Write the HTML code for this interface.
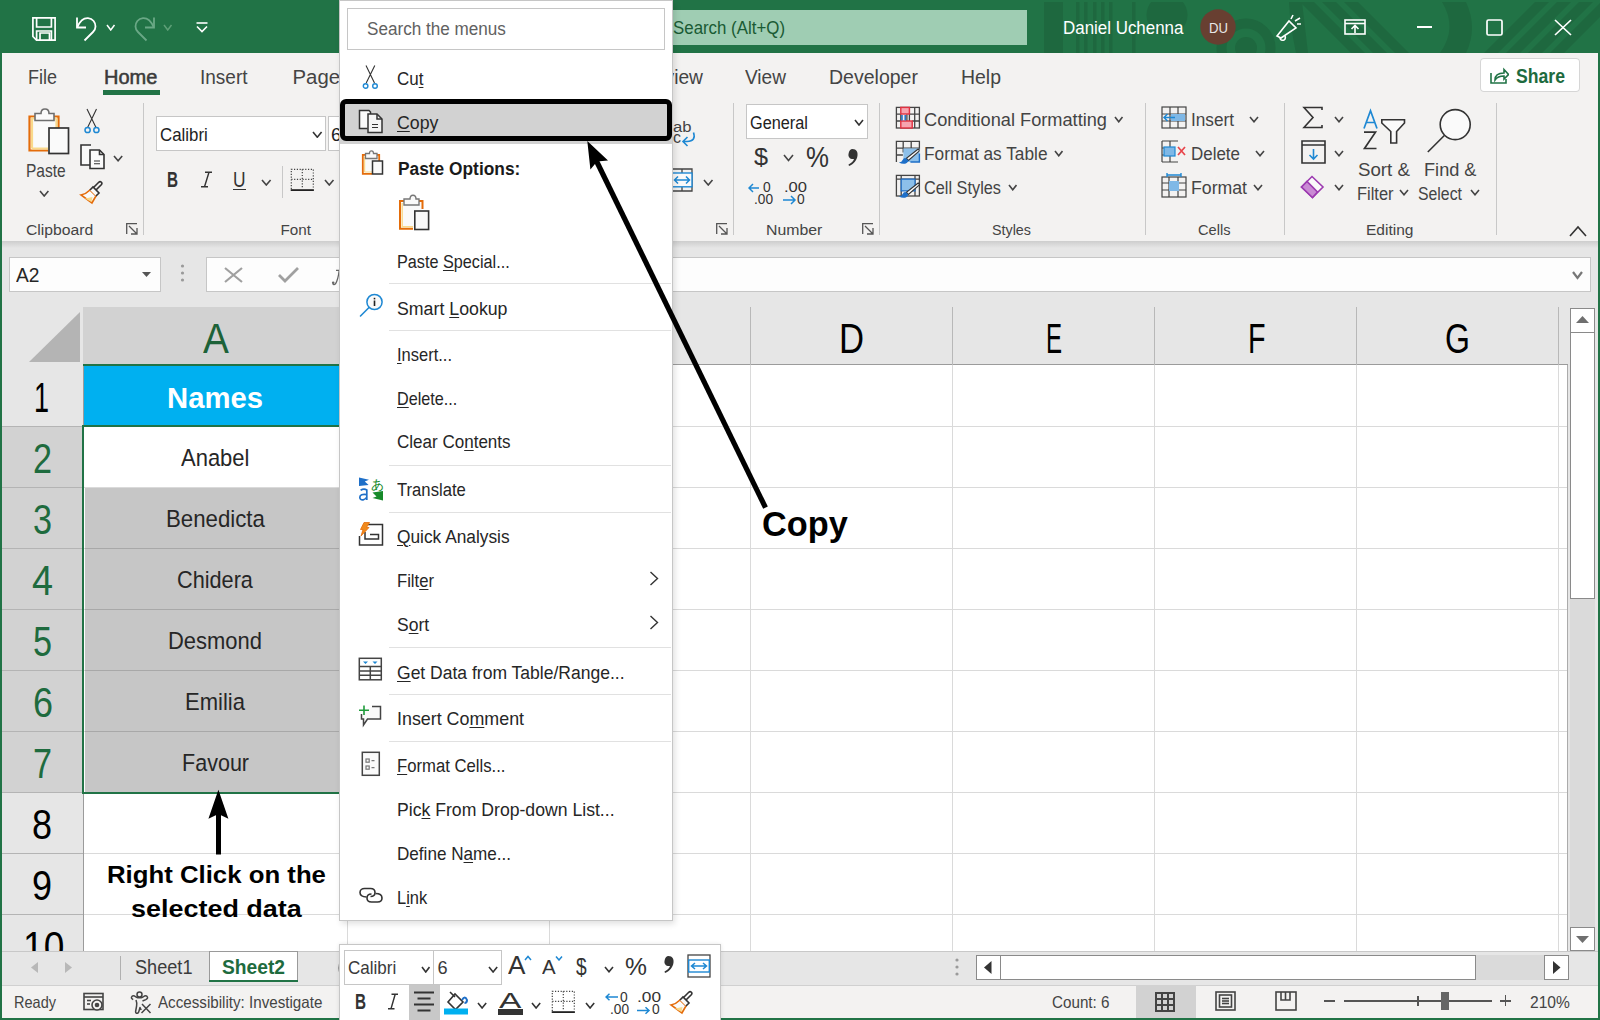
<!DOCTYPE html><html><head><meta charset="utf-8"><style>
html,body{margin:0;padding:0;width:1600px;height:1020px;overflow:hidden;background:#fff}
body{position:relative;font-family:"Liberation Sans",sans-serif}
.t{position:absolute;line-height:1;white-space:nowrap;transform-origin:0 0}
.r{position:absolute;display:block}
u{text-decoration:underline;text-underline-offset:2px;text-decoration-thickness:1px}
</style></head><body>
<div class="r" style="left:0px;top:0px;width:1600px;height:53px;background:#217346;"></div>
<svg class="r" style="left:0;top:0" width="1600" height="53" viewBox="0 0 1600 53"><defs><clipPath id="tbc"><rect x="0" y="2" width="1600" height="51"/></clipPath></defs>
    <g clip-path="url(#tbc)" fill="#1e683f" stroke="none">
    <rect x="1044" y="0" width="19" height="53"/>
    <rect x="1076" y="0" width="3.5" height="53"/><rect x="1084" y="0" width="3.5" height="53"/>
    <rect x="1093" y="0" width="3.5" height="53"/><rect x="1101" y="0" width="3.5" height="53"/>
    <rect x="1109" y="0" width="3.5" height="53"/><rect x="1132" y="0" width="3.5" height="53"/>
    <circle cx="1167" cy="15" r="20.5"/>
    <circle cx="1246" cy="48" r="24.5" fill="none" stroke="#1e683f" stroke-width="10"/><circle cx="1246" cy="48" r="11" fill="#1e683f"/><path d="M1289 2 H1302 L1308 53 H1296 Q1290 25 1289 2 Z"/>
    <path d="M1300 2 L1314 2 L1365 53 L1351 53 Z"/><path d="M1322 2 L1336 2 L1387 53 L1373 53 Z"/><path d="M1344 2 L1358 2 L1409 53 L1395 53 Z"/>
    <path d="M1442 2 L1466 2 Q1478 28 1466 53 L1440 53 Q1458 28 1442 2 Z"/>
    <path d="M1484 53 L1535 2 L1549 2 L1498 53 Z"/><path d="M1506 53 L1557 2 L1571 2 L1520 53 Z"/>
    <path d="M1528 53 L1579 2 L1593 2 L1542 53 Z"/><path d="M1550 53 L1601 2 L1615 2 L1564 53 Z"/>
    </g></svg>
<div class="r" style="left:0px;top:53px;width:1600px;height:967px;background:#217346;"></div>
<div class="r" style="left:2px;top:53px;width:1596px;height:188px;background:#f3f2f1;"></div>
<div class="r" style="left:2px;top:241px;width:1596px;height:66px;background:#e6e6e6;"></div>
<div class="r" style="left:2px;top:241px;width:1596px;height:7px;background:linear-gradient(#cdcdcd,#e6e6e6);"></div>
<div class="r" style="left:9px;top:257px;width:152px;height:35px;background:#fdfdfd;box-shadow:inset 0 0 0 1px #c6c6c6;"></div>
<div class="r" style="left:206px;top:257px;width:1385px;height:35px;background:#fdfdfd;box-shadow:inset 0 0 0 1px #c6c6c6;"></div>
<div class="r" style="left:2px;top:307px;width:1568px;height:644px;background:#ffffff;"></div>
<div class="r" style="left:2px;top:307px;width:1568px;height:58px;background:#e6e6e6;"></div>
<div class="r" style="left:83px;top:307px;width:264px;height:58px;background:#d2d2d2;"></div>
<div class="r" style="left:2px;top:365px;width:81px;height:586px;background:#e6e6e6;"></div>
<div class="r" style="left:2px;top:426px;width:81px;height:366px;background:#d2d2d2;"></div>
<div class="r" style="left:83px;top:364px;width:1485px;height:1px;background:#9b9b9b;"></div>
<div class="r" style="left:83px;top:365px;width:1px;height:586px;background:#9b9b9b;"></div>
<svg class="r" style="left:29px;top:312px;" width="52" height="51" viewBox="0 0 52 51"><path d="M51 0 L51 50 L0 50 Z" fill="#b4b4b4"/></svg>
<div class="r" style="left:347px;top:307px;width:1px;height:58px;background:#b8b8b8;"></div>
<div class="r" style="left:549px;top:307px;width:1px;height:58px;background:#b8b8b8;"></div>
<div class="r" style="left:750px;top:307px;width:1px;height:58px;background:#b8b8b8;"></div>
<div class="r" style="left:952px;top:307px;width:1px;height:58px;background:#b8b8b8;"></div>
<div class="r" style="left:1154px;top:307px;width:1px;height:58px;background:#b8b8b8;"></div>
<div class="r" style="left:1356px;top:307px;width:1px;height:58px;background:#b8b8b8;"></div>
<div class="r" style="left:1558px;top:307px;width:1px;height:58px;background:#b8b8b8;"></div>
<div class="r" style="left:347px;top:365px;width:1px;height:586px;background:#dadada;"></div>
<div class="r" style="left:549px;top:365px;width:1px;height:586px;background:#dadada;"></div>
<div class="r" style="left:750px;top:365px;width:1px;height:586px;background:#dadada;"></div>
<div class="r" style="left:952px;top:365px;width:1px;height:586px;background:#dadada;"></div>
<div class="r" style="left:1154px;top:365px;width:1px;height:586px;background:#dadada;"></div>
<div class="r" style="left:1356px;top:365px;width:1px;height:586px;background:#dadada;"></div>
<div class="r" style="left:1558px;top:365px;width:1px;height:586px;background:#dadada;"></div>
<div class="r" style="left:84px;top:426px;width:1484px;height:1px;background:#dadada;"></div>
<div class="r" style="left:2px;top:426px;width:81px;height:1px;background:#b4b4b4;"></div>
<div class="r" style="left:84px;top:487px;width:1484px;height:1px;background:#dadada;"></div>
<div class="r" style="left:2px;top:487px;width:81px;height:1px;background:#b4b4b4;"></div>
<div class="r" style="left:84px;top:548px;width:1484px;height:1px;background:#dadada;"></div>
<div class="r" style="left:2px;top:548px;width:81px;height:1px;background:#b4b4b4;"></div>
<div class="r" style="left:84px;top:609px;width:1484px;height:1px;background:#dadada;"></div>
<div class="r" style="left:2px;top:609px;width:81px;height:1px;background:#b4b4b4;"></div>
<div class="r" style="left:84px;top:670px;width:1484px;height:1px;background:#dadada;"></div>
<div class="r" style="left:2px;top:670px;width:81px;height:1px;background:#b4b4b4;"></div>
<div class="r" style="left:84px;top:731px;width:1484px;height:1px;background:#dadada;"></div>
<div class="r" style="left:2px;top:731px;width:81px;height:1px;background:#b4b4b4;"></div>
<div class="r" style="left:84px;top:792px;width:1484px;height:1px;background:#dadada;"></div>
<div class="r" style="left:2px;top:792px;width:81px;height:1px;background:#b4b4b4;"></div>
<div class="r" style="left:84px;top:853px;width:1484px;height:1px;background:#dadada;"></div>
<div class="r" style="left:2px;top:853px;width:81px;height:1px;background:#b4b4b4;"></div>
<div class="r" style="left:84px;top:914px;width:1484px;height:1px;background:#dadada;"></div>
<div class="r" style="left:2px;top:914px;width:81px;height:1px;background:#b4b4b4;"></div>
<div class="r" style="left:1567px;top:365px;width:1px;height:586px;background:#ababab;"></div>
<div class="r" style="left:84px;top:365px;width:263px;height:61px;background:#00b0f0;"></div>
<div class="r" style="left:85px;top:488px;width:262px;height:304px;background:#c6c6c6;"></div>
<div class="r" style="left:85px;top:548px;width:262px;height:1px;background:#a8a8a8;"></div>
<div class="r" style="left:85px;top:609px;width:262px;height:1px;background:#a8a8a8;"></div>
<div class="r" style="left:85px;top:670px;width:262px;height:1px;background:#a8a8a8;"></div>
<div class="r" style="left:85px;top:731px;width:262px;height:1px;background:#a8a8a8;"></div>
<div class="r" style="left:84px;top:426px;width:263px;height:1px;background:#ffffff;"></div>
<div class="r" style="left:82px;top:425px;width:265px;height:2px;background:#217346;"></div>
<div class="r" style="left:82px;top:425px;width:2px;height:369px;background:#217346;"></div>
<div class="r" style="left:82px;top:792px;width:265px;height:2px;background:#217346;"></div>
<div class="r" style="left:83px;top:364px;width:264px;height:2px;background:#217346;"></div>
<div class="t" style="left:203.00px;top:317.00px;font-size:42.59px;color:#1d6238;transform:scaleX(0.9112);">A</div>
<div class="t" style="left:839.00px;top:317.00px;font-size:43.02px;color:#000;transform:scaleX(0.8070);">D</div>
<div class="t" style="left:1046.40px;top:317.00px;font-size:43.02px;color:#000;transform:scaleX(0.5592);">E</div>
<div class="t" style="left:1247.50px;top:317.00px;font-size:43.02px;color:#000;transform:scaleX(0.6668);">F</div>
<div class="t" style="left:1445.00px;top:317.00px;font-size:43.02px;color:#000;transform:scaleX(0.7450);">G</div>
<div class="t" style="left:34.00px;top:377.00px;font-size:42.15px;color:#000;transform:scaleX(0.6412);">1</div>
<div class="t" style="left:33.00px;top:438.00px;font-size:42.15px;color:#1e6b3e;transform:scaleX(0.8122);">2</div>
<div class="t" style="left:33.00px;top:499.00px;font-size:42.15px;color:#1e6b3e;transform:scaleX(0.8122);">3</div>
<div class="t" style="left:32.00px;top:560.00px;font-size:42.15px;color:#1e6b3e;transform:scaleX(0.8977);">4</div>
<div class="t" style="left:33.00px;top:621.00px;font-size:42.15px;color:#1e6b3e;transform:scaleX(0.8122);">5</div>
<div class="t" style="left:33.00px;top:682.00px;font-size:42.15px;color:#1e6b3e;transform:scaleX(0.8549);">6</div>
<div class="t" style="left:33.00px;top:743.00px;font-size:42.15px;color:#1e6b3e;transform:scaleX(0.8122);">7</div>
<div class="t" style="left:32.00px;top:804.00px;font-size:42.15px;color:#000;transform:scaleX(0.8549);">8</div>
<div class="t" style="left:32.00px;top:865.00px;font-size:42.15px;color:#000;transform:scaleX(0.8549);">9</div>
<div class="t" style="left:23.30px;top:926.00px;font-size:42.15px;color:#000;transform:scaleX(0.8806);">10</div>
<div class="t" style="left:167.00px;top:384.00px;font-size:29.07px;color:#fff;font-weight:bold;transform:scaleX(1.0068);">Names</div>
<div class="t" style="left:180.50px;top:447.00px;font-size:23.26px;color:#262626;transform:scaleX(0.9456);">Anabel</div>
<div class="t" style="left:166.00px;top:508.00px;font-size:23.26px;color:#262626;transform:scaleX(0.9566);">Benedicta</div>
<div class="t" style="left:177.00px;top:569.00px;font-size:23.26px;color:#262626;transform:scaleX(0.9324);">Chidera</div>
<div class="t" style="left:168.00px;top:630.00px;font-size:23.26px;color:#262626;transform:scaleX(0.9444);">Desmond</div>
<div class="t" style="left:185.00px;top:691.00px;font-size:23.26px;color:#262626;transform:scaleX(0.9468);">Emilia</div>
<div class="t" style="left:182.00px;top:752.00px;font-size:23.26px;color:#262626;transform:scaleX(0.9264);">Favour</div>
<div class="r" style="left:1568px;top:307px;width:30px;height:644px;background:#e6e6e6;"></div>
<div class="r" style="left:1570px;top:308px;width:25px;height:25px;background:#fff;box-shadow:inset 0 0 0 1px #8a8a8a;"></div>
<svg class="r" style="left:1576px;top:316px;" width="13" height="8" viewBox="0 0 13 8"><path d="M0 7 L6.5 0 L13 7 Z" fill="#6f6f6f"/></svg>
<div class="r" style="left:1570px;top:332px;width:25px;height:267px;background:#fff;box-shadow:inset 0 0 0 1px #8a8a8a;"></div>
<div class="r" style="left:1570px;top:599px;width:25px;height:328px;background:#dadada;"></div>
<div class="r" style="left:1570px;top:927px;width:25px;height:24px;background:#fff;box-shadow:inset 0 0 0 1px #8a8a8a;"></div>
<svg class="r" style="left:1576px;top:936px;" width="13" height="8" viewBox="0 0 13 8"><path d="M0 0 L6.5 7 L13 0 Z" fill="#6f6f6f"/></svg>
<div class="r" style="left:2px;top:951px;width:1596px;height:34px;background:#e6e6e6;"></div>
<div class="r" style="left:2px;top:951px;width:1596px;height:1px;background:#c8c8c8;"></div>
<div class="r" style="left:2px;top:985px;width:1596px;height:1px;background:#d0d0d0;"></div>
<svg class="r" style="left:31px;top:962px;" width="7" height="11" viewBox="0 0 7 11"><path d="M7 0 L0 5.5 L7 11 Z" fill="#b8b8b8"/></svg>
<svg class="r" style="left:65px;top:962px;" width="7" height="11" viewBox="0 0 7 11"><path d="M0 0 L7 5.5 L0 11 Z" fill="#b8b8b8"/></svg>
<div class="r" style="left:120px;top:956px;width:1px;height:24px;background:#b0b0b0;"></div>
<div class="t" style="left:134.50px;top:957.00px;font-size:20.35px;color:#3b3b3b;transform:scaleX(0.8914);">Sheet1</div>
<div class="r" style="left:209px;top:951px;width:89px;height:31px;background:#fff;box-shadow:inset 1px 1px 0 #9a9a9a, inset -1px 0 0 #9a9a9a;"></div>
<div class="r" style="left:209px;top:980px;width:89px;height:2px;background:#217346;"></div>
<div class="t" style="left:222.00px;top:957.00px;font-size:20.35px;color:#1e6b3e;font-weight:bold;transform:scaleX(0.9439);">Sheet2</div>
<svg class="r" style="left:335px;top:960px;" width="8" height="16" viewBox="0 0 8 16"><path d="M6 1.5 Q1.5 8 6 14.5" fill="none" stroke="#9a9a9a" stroke-width="1.5"/></svg>
<svg class="r" style="left:955px;top:958px;" width="4" height="18" viewBox="0 0 4 18"><circle cx="2" cy="2" r="1.6" fill="#9a9a9a"/><circle cx="2" cy="9" r="1.6" fill="#9a9a9a"/><circle cx="2" cy="16" r="1.6" fill="#9a9a9a"/></svg>
<div class="r" style="left:976px;top:955px;width:593px;height:25px;background:#dadada;"></div>
<div class="r" style="left:976px;top:955px;width:25px;height:25px;background:#fff;box-shadow:inset 0 0 0 1px #8a8a8a;"></div>
<svg class="r" style="left:984px;top:961px;" width="8" height="13" viewBox="0 0 8 13"><path d="M7.5 0 L0 6.5 L7.5 13 Z" fill="#333"/></svg>
<div class="r" style="left:1000px;top:955px;width:476px;height:25px;background:#fff;box-shadow:inset 0 0 0 1px #8a8a8a;"></div>
<div class="r" style="left:1544px;top:955px;width:25px;height:25px;background:#fff;box-shadow:inset 0 0 0 1px #8a8a8a;"></div>
<svg class="r" style="left:1553px;top:961px;" width="8" height="13" viewBox="0 0 8 13"><path d="M0 0 L7.5 6.5 L0 13 Z" fill="#333"/></svg>
<div class="r" style="left:2px;top:986px;width:1596px;height:32px;background:#f3f2f1;"></div>
<div class="t" style="left:14.00px;top:995.00px;font-size:16.72px;color:#444;transform:scaleX(0.8694);">Ready</div>
<svg class="r" style="left:83px;top:992px;" width="22" height="20" viewBox="0 0 22 20"><g fill="none" stroke="#444" stroke-width="1.6"><rect x="1" y="1.5" width="19" height="16"/><line x1="1" y1="5" x2="20" y2="5"/><line x1="4" y1="8.5" x2="8" y2="8.5"/><line x1="4" y1="12" x2="7" y2="12"/><circle cx="14" cy="13" r="5" fill="#f3f2f1"/></g><circle cx="14" cy="13" r="2.3" fill="#444"/></svg>
<svg class="r" style="left:129px;top:990px;" width="24" height="26" viewBox="0 0 24 26"><g fill="none" stroke="#444" stroke-width="1.5" stroke-linejoin="round"><circle cx="10.5" cy="4.6" r="2.5"/><path d="M4.2 9.6 Q1.2 8.2 3.2 6.2 Q4.5 5.2 7 7 Q10.5 8.6 14 7 Q16.5 5.2 17.8 6.2 Q19.8 8.2 16.8 9.6 L13.5 11"/><path d="M7 10 Q8.2 13 7.6 16 L6.6 21.5 Q6.6 23.6 8.4 23.3 Q9.6 23 10 21 L11 17.5 L12.2 20"/><path d="M13 14 L21.5 23 M21.5 14 L12.5 23"/></g></svg>
<div class="t" style="left:158.00px;top:995.00px;font-size:16.72px;color:#444;transform:scaleX(0.9079);">Accessibility: Investigate</div>
<div class="t" style="left:1052.00px;top:995.00px;font-size:16.72px;color:#444;transform:scaleX(0.9100);">Count: 6</div>
<div class="r" style="left:1136px;top:985px;width:60px;height:33px;background:#d2d2d2;"></div>
<svg class="r" style="left:1155px;top:992px;" width="20" height="20" viewBox="0 0 20 20"><g fill="none" stroke="#444" stroke-width="2"><rect x="1" y="1" width="18" height="18"/><line x1="7" y1="1" x2="7" y2="19"/><line x1="13" y1="1" x2="13" y2="19"/><line x1="1" y1="7" x2="19" y2="7"/><line x1="1" y1="13" x2="19" y2="13"/></g></svg>
<svg class="r" style="left:1215px;top:991px;" width="21" height="20" viewBox="0 0 21 20"><g fill="none" stroke="#444" stroke-width="1.6"><rect x="1" y="1" width="19" height="18"/><rect x="4.5" y="4" width="12" height="12"/><line x1="7" y1="7.5" x2="14" y2="7.5"/><line x1="7" y1="10" x2="14" y2="10"/><line x1="7" y1="12.5" x2="14" y2="12.5"/></g></svg>
<svg class="r" style="left:1275px;top:991px;" width="22" height="20" viewBox="0 0 22 20"><g fill="none" stroke="#444" stroke-width="1.6"><rect x="1" y="1" width="20" height="18"/><polyline points="6,1 6,9 15,9 15,1"/><line x1="10.5" y1="1" x2="10.5" y2="9"/></g></svg>
<div class="r" style="left:1324px;top:1000px;width:11px;height:1.5px;background:#555;"></div>
<div class="r" style="left:1344px;top:1000px;width:148px;height:1.5px;background:#555;"></div>
<div class="r" style="left:1417px;top:996px;width:1.5px;height:10px;background:#555;"></div>
<div class="r" style="left:1441px;top:992px;width:8px;height:18px;background:#666;"></div>
<div class="r" style="left:1500px;top:1000px;width:11px;height:1.5px;background:#555;"></div>
<div class="r" style="left:1504.8px;top:995px;width:1.5px;height:11px;background:#555;"></div>
<div class="t" style="left:1530.00px;top:995.00px;font-size:16.72px;color:#444;transform:scaleX(0.9348);">210%</div>
<div class="t" style="left:16.00px;top:265.00px;font-size:20.35px;color:#262626;transform:scaleX(0.9427);">A2</div>
<svg class="r" style="left:142px;top:272px;" width="9" height="5" viewBox="0 0 9 5"><path d="M0 0 L9 0 L4.5 5 Z" fill="#555"/></svg>
<svg class="r" style="left:180px;top:264px;" width="5" height="18" viewBox="0 0 5 18"><circle cx="2.5" cy="2" r="1.6" fill="#9a9a9a"/><circle cx="2.5" cy="9" r="1.6" fill="#9a9a9a"/><circle cx="2.5" cy="16" r="1.6" fill="#9a9a9a"/></svg>
<svg class="r" style="left:224px;top:267px;" width="19" height="16" viewBox="0 0 19 16"><path d="M1 1 L18 15 M18 1 L1 15" stroke="#a0a0a0" stroke-width="2.2" fill="none"/></svg>
<svg class="r" style="left:278px;top:267px;" width="21" height="16" viewBox="0 0 21 16"><path d="M1 8 L7 14 L20 1" stroke="#a0a0a0" stroke-width="2.8" fill="none"/></svg>
<svg class="r" style="left:330px;top:266px;" width="12" height="22" viewBox="0 0 12 22"><path d="M6 4.3 H10 M9.2 4.5 Q8 14 5.5 17.8 Q3.8 19.6 2.8 17.6" fill="none" stroke="#666" stroke-width="1.3"/><circle cx="3.2" cy="16.8" r="1.3" fill="#666"/></svg>
<svg class="r" style="left:1572px;top:271px;" width="11" height="9" viewBox="0 0 11 9"><path d="M1 1 L5.5 7 L10 1" stroke="#777" stroke-width="2.2" fill="none"/></svg>
<svg class="r" style="left:31px;top:16px;" width="26" height="26" viewBox="0 0 26 26"><g fill="none" stroke="#fff" stroke-width="1.7"><path d="M1.9 1.9 H24.1 V24.1 H5.5 L1.9 20.5 Z"/><path d="M5.6 1.9 V11 H20.4 V1.9"/><path d="M5.6 24.1 V15 H20.4 V24.1"/><path d="M9 24.1 V17 H18.5 V24.1"/></g></svg>
<svg class="r" style="left:75px;top:16px;" width="24" height="26" viewBox="0 0 24 26"><g fill="none" stroke="#fff" stroke-width="1.8"><path d="M2 1.5 V11.5 H11"/><path d="M2.5 11 C5 5 9 2 13 2.2 C18 2.5 20.5 6.5 20.5 10.5 C20.5 13 19.5 14.5 18 16 L9.5 24.5"/></g></svg>
<svg class="r" style="left:106px;top:24px;" width="9.5" height="7" viewBox="0 0 9.5 7"><path d="M1 1 L4.75 6 L8.5 1" fill="none" stroke="#fff" stroke-width="1.5"/></svg>
<svg class="r" style="left:132px;top:16px;" width="24" height="26" viewBox="0 0 24 26"><g fill="none" stroke="#6aa886" stroke-width="1.8"><path d="M22 1.5 V11.5 H13"/><path d="M21.5 11 C19 5 15 2 11 2.2 C6 2.5 3.5 6.5 3.5 10.5 C3.5 13 4.5 14.5 6 16 L14.5 24.5"/></g></svg>
<svg class="r" style="left:163px;top:24px;" width="9.5" height="7" viewBox="0 0 9.5 7"><path d="M1 1 L4.75 6 L8.5 1" fill="none" stroke="#5e9f77" stroke-width="1.5"/></svg>
<svg class="r" style="left:196px;top:22px;" width="12" height="11" viewBox="0 0 12 11"><g fill="none" stroke="#fff" stroke-width="1.6"><path d="M0.5 1 H11.5"/><path d="M1 4.5 L6 9.5 L11 4.5"/></g></svg>
<div class="r" style="left:672px;top:10px;width:355px;height:35px;background:#9fcdb3;"></div>
<div class="t" style="left:673.00px;top:19.00px;font-size:18.90px;color:#1a5b34;transform:scaleX(0.8927);">Search (Alt+Q)</div>
<div class="t" style="left:1063.00px;top:19.00px;font-size:18.90px;color:#fff;transform:scaleX(0.8957);">Daniel Uchenna</div>
<svg class="r" style="left:1200px;top:9px;" width="36" height="36" viewBox="0 0 36 36"><circle cx="18" cy="18" r="17.7" fill="#683f31"/></svg>
<div class="t" style="left:1208.50px;top:20.00px;font-size:15.26px;color:#e8e8e8;transform:scaleX(0.8615);">DU</div>
<svg class="r" style="left:1275px;top:13px;" width="28" height="28" viewBox="0 0 28 28"><g fill="none" stroke="#fff" stroke-width="1.6"><path d="M2 23 L14 8 L21 15 L6 25 Z"/><path d="M5 24.5 Q5 28 9 27 Q11 26 10 23"/><path d="M16 6 L18 2 M20 8 L25 5 M22 11 L26 11"/></g></svg>
<svg class="r" style="left:1344px;top:19px;" width="22" height="16" viewBox="0 0 22 16"><g fill="none" stroke="#fff" stroke-width="1.6"><rect x="1" y="1" width="20" height="14"/><line x1="1" y1="4.5" x2="21" y2="4.5"/><path d="M11 14 V7 M7.5 10 L11 6.5 L14.5 10"/></g></svg>
<div class="r" style="left:1417px;top:26px;width:15px;height:1.6000000000000014px;background:#fff;"></div>
<svg class="r" style="left:1486px;top:19px;" width="17" height="17" viewBox="0 0 17 17"><rect x="1" y="1" width="15" height="15" rx="1.5" fill="none" stroke="#fff" stroke-width="1.7"/></svg>
<svg class="r" style="left:1554px;top:19px;" width="18" height="17" viewBox="0 0 18 17"><path d="M1 1 L17 16 M17 1 L1 16" stroke="#fff" stroke-width="1.7"/></svg>
<div class="t" style="left:28.00px;top:67.00px;font-size:20.35px;color:#444;transform:scaleX(0.8852);">File</div>
<div class="t" style="left:200.00px;top:67.00px;font-size:20.35px;color:#444;transform:scaleX(0.9337);">Insert</div>
<div class="t" style="left:292.50px;top:67.00px;font-size:20.35px;color:#444;">Page Layout</div>
<div class="t" style="left:640.00px;top:67.00px;font-size:20.35px;color:#444;transform:scaleX(0.9439);">Review</div>
<div class="t" style="left:745.00px;top:67.00px;font-size:20.35px;color:#444;transform:scaleX(0.9371);">View</div>
<div class="t" style="left:829.00px;top:67.00px;font-size:20.35px;color:#444;transform:scaleX(0.9591);">Developer</div>
<div class="t" style="left:960.50px;top:67.00px;font-size:20.35px;color:#444;transform:scaleX(0.9565);">Help</div>
<div class="t" style="left:104.30px;top:67.00px;font-size:20.35px;color:#3a3a3a;transform:scaleX(0.9828);-webkit-text-stroke:0.55px #3a3a3a;">Home</div>
<div class="r" style="left:103px;top:90px;width:57px;height:5px;background:#217346;"></div>
<div class="r" style="left:1480px;top:58px;width:100px;height:34px;background:#fff;box-shadow:inset 0 0 0 1px #d6d6d6;border-radius:4px;"></div>
<svg class="r" style="left:1490px;top:67px;" width="19" height="17" viewBox="0 0 19 17"><g fill="none" stroke="#217346" stroke-width="1.6"><path d="M1 6 V16 H16 V12"/><path d="M5 13 C5 8 9 6 14 6 V2.5 L18.5 7.5 L14 12 V9 C10 9 7 10 5 13 Z"/></g></svg>
<div class="t" style="left:1516.00px;top:67.00px;font-size:19.62px;color:#1e6b3e;font-weight:bold;transform:scaleX(0.8983);">Share</div>
<svg class="r" style="left:27px;top:108px;" width="43" height="47" viewBox="0 0 43 47"><g stroke-width="1.7" fill="#fafafa">
      <path d="M21 42.5 H2.5 V8.5 H31.5 V26" stroke="#e46c0a" fill="#fafafa" stroke-width="2.2"/>
      <path d="M29.5 10.5 V26 M5 40.5 V10.5 H29.5 M5 40.5 H21" stroke="#f9d98b" fill="none" stroke-width="2.2"/>
      <path d="M8 5.5 H14 Q14 1 18 1 Q22 1 22 5.5 H27 V12.5 H8 Z" stroke="#6e6e6e" fill="#fafafa" stroke-width="1.6"/>
      <rect x="22" y="20" width="19.5" height="25.5" stroke="#333" fill="#fafafa"/>
    </g></svg>
<div class="t" style="left:25.50px;top:162.00px;font-size:18.02px;color:#444;transform:scaleX(0.8621);">Paste</div>
<svg class="r" style="left:39px;top:190px;" width="10.4" height="7" viewBox="0 0 10.4 7"><path d="M1 1 L5.2 6 L9.4 1" fill="none" stroke="#444" stroke-width="1.6"/></svg>
<svg class="r" style="left:83px;top:108px;" width="18" height="26" viewBox="0 0 18 26"><g fill="none"><path d="M4.6 19.5 L13.5 1 M13 19.5 L4 1" stroke="#333" stroke-width="1.1"/>
      <circle cx="4.6" cy="22" r="2.6" stroke="#1e88d3" stroke-width="1.5"/><circle cx="13.4" cy="22" r="2.6" stroke="#1e88d3" stroke-width="1.5"/></g></svg>
<svg class="r" style="left:79px;top:144px;" width="26" height="26" viewBox="0 0 26 26"><g fill="#fafafa" stroke="#333" stroke-width="1.6"><path d="M12 1 H2 V21 H11"/>
      <path d="M11 6 H20.5 L25 10.5 V24.5 H11 Z"/><path d="M20.5 6 V10.5 H25" fill="none"/><path d="M15 17 H21 M15 19.8 H21" stroke-width="1.1"/></g></svg>
<svg class="r" style="left:113.2px;top:155px;" width="10.2" height="6.8" viewBox="0 0 10.2 6.8"><path d="M1 1 L5.1 5.8 L9.2 1" fill="none" stroke="#444" stroke-width="1.6"/></svg>
<svg class="r" style="left:79px;top:180px;" width="26" height="25" viewBox="0 0 26 25"><g stroke-width="1.6"><path d="M2 15 Q7 14 11 10 L17 16 Q14 21 13 23 Z" fill="#fafafa" stroke="#e46c0a"/>
      <path d="M6 18.5 L13.5 17 L12.5 22 Z" fill="#f9d98b" stroke="none"/>
      <path d="M11 10 L14 7 L20 13 L17 16" fill="#fafafa" stroke="#333"/><path d="M17 10 L22.5 4.5 Q23.5 3 22 2 Q21 1 19.5 2.5 L14.5 7.5" fill="none" stroke="#333"/></g></svg>
<div class="t" style="left:26.30px;top:222.00px;font-size:15.26px;color:#444;transform:scaleX(1.0303);">Clipboard</div>
<svg class="r" style="left:126px;top:223px;" width="12" height="12" viewBox="0 0 12 12"><g fill="none" stroke="#555" stroke-width="1.3"><path d="M0.7 11 L0.7 0.7 L11 0.7"/><path d="M3 3 L10.5 10.5 M5 11 L11 11 L11 5"/></g></svg>
<div class="r" style="left:143px;top:103px;width:1px;height:132px;background:#c8c8c8;"></div>
<div class="r" style="left:156px;top:116px;width:170px;height:35px;background:#fff;box-shadow:inset 0 0 0 1px #c6c6c6;"></div>
<div class="t" style="left:159.50px;top:126.00px;font-size:18.60px;color:#222;transform:scaleX(0.9062);">Calibri</div>
<svg class="r" style="left:312px;top:131px;" width="10.6" height="7.2" viewBox="0 0 10.6 7.2"><path d="M1 1 L5.3 6.2 L9.6 1" fill="none" stroke="#333" stroke-width="1.6"/></svg>
<div class="r" style="left:328px;top:116px;width:17px;height:35px;background:#fff;box-shadow:inset 0 0 0 1px #c6c6c6;"></div>
<div class="t" style="left:331.00px;top:126.00px;font-size:18.60px;color:#222;">6</div>
<div class="t" style="left:167.00px;top:169.00px;font-size:21.80px;color:#333;font-weight:bold;transform:scaleX(0.7007);">B</div>
<svg class="r" style="left:200px;top:171px;" width="13" height="17" viewBox="0 0 13 17"><path d="M5 1.2 H12 M1 15.8 H8 M9 1.2 L4.5 15.8" fill="none" stroke="#333" stroke-width="1.4"/></svg>
<div class="t" style="left:233.00px;top:169.00px;font-size:21.80px;color:#333;transform:scaleX(0.7963);">U</div>
<div class="r" style="left:232.6px;top:188.7px;width:13.400000000000006px;height:1.5px;background:#333;"></div>
<svg class="r" style="left:261px;top:179px;" width="10.6" height="7" viewBox="0 0 10.6 7"><path d="M1 1 L5.3 6 L9.6 1" fill="none" stroke="#444" stroke-width="1.6"/></svg>
<div class="r" style="left:282px;top:166px;width:1px;height:32px;background:#c8c8c8;"></div>
<svg class="r" style="left:290px;top:168px;" width="25" height="24" viewBox="0 0 25 24"><g fill="none" stroke="#444" stroke-width="1.2" stroke-dasharray="1.2 1.6"><path d="M1.3 21 V1.3 H23.3 V21"/><path d="M12.3 1.3 V21 M1.3 11.3 H23.3"/></g><rect x="0.7" y="21.2" width="23.2" height="1.8" fill="#222"/></svg>
<svg class="r" style="left:324px;top:179px;" width="10.5" height="7" viewBox="0 0 10.5 7"><path d="M1 1 L5.25 6 L9.5 1" fill="none" stroke="#444" stroke-width="1.6"/></svg>
<div class="t" style="left:280.50px;top:222.00px;font-size:15.26px;color:#444;">Font</div>
<div class="t" style="left:673.00px;top:119.00px;font-size:15.26px;color:#444;transform:scaleX(1.0920);">ab</div>
<div class="t" style="left:672.50px;top:129.00px;font-size:17.01px;color:#444;transform:scaleX(0.9408);">c</div>
<svg class="r" style="left:678px;top:128px;" width="20" height="20" viewBox="0 0 20 20"><path d="M15.5 4.5 Q18.5 13 9 13.5 H5.5 M9.5 9 L5 13.5 L9.5 18" fill="none" stroke="#1e88d3" stroke-width="1.6"/></svg>
<svg class="r" style="left:672px;top:168px;" width="22" height="24" viewBox="0 0 22 24"><g fill="none" stroke="#444" stroke-width="1.3"><path d="M0 1 H20 V23 H0 M10 1 V5 M10 19 V23"/></g><rect x="0" y="5" width="20" height="13.8" fill="#fafafa" stroke="#1e88d3" stroke-width="1.4"/><path d="M2.5 12 H17.5 M6 8.5 L2.5 12 L6 15.5 M14 8.5 L17.5 12 L14 15.5" stroke="#1e88d3" stroke-width="1.5" fill="none"/></svg>
<svg class="r" style="left:703px;top:179px;" width="10.5" height="7" viewBox="0 0 10.5 7"><path d="M1 1 L5.25 6 L9.5 1" fill="none" stroke="#444" stroke-width="1.6"/></svg>
<svg class="r" style="left:716px;top:223px;" width="12" height="12" viewBox="0 0 12 12"><g fill="none" stroke="#555" stroke-width="1.3"><path d="M0.7 11 L0.7 0.7 L11 0.7"/><path d="M3 3 L10.5 10.5 M5 11 L11 11 L11 5"/></g></svg>
<div class="r" style="left:733px;top:103px;width:1px;height:132px;background:#c8c8c8;"></div>
<div class="r" style="left:746px;top:104px;width:122px;height:35px;background:#fff;box-shadow:inset 0 0 0 1px #c6c6c6;"></div>
<div class="t" style="left:750.00px;top:114.00px;font-size:18.90px;color:#222;transform:scaleX(0.8622);">General</div>
<svg class="r" style="left:854px;top:119px;" width="10" height="7" viewBox="0 0 10 7"><path d="M1 1 L5.0 6 L9 1" fill="none" stroke="#333" stroke-width="1.6"/></svg>
<div class="t" style="left:754.00px;top:145.00px;font-size:24.71px;color:#333;transform:scaleX(1.0209);">$</div>
<svg class="r" style="left:782.5px;top:154px;" width="11" height="7.5" viewBox="0 0 11 7.5"><path d="M1 1 L5.5 6.5 L10 1" fill="none" stroke="#444" stroke-width="1.6"/></svg>
<div class="t" style="left:806.00px;top:143.00px;font-size:29.07px;color:#333;transform:scaleX(0.8890);">%</div>
<svg class="r" style="left:846px;top:148px;" width="13" height="19" viewBox="0 0 13 19"><path d="M6.5 1 C10.5 1 12 4 11.5 7.5 C11 12 8 16 3 18 L2.5 16.5 C5.5 15 7.5 13 8 11 C4 11.5 2 9 2.5 6 C3 2.5 4.5 1 6.5 1 Z" fill="#333"/></svg>
<svg class="r" style="left:748px;top:180px;" width="27" height="26" viewBox="0 0 27 26"><path d="M1 8 H11 M5 4 L1 8 L5 12" stroke="#1e88d3" stroke-width="1.5" fill="none"/></svg>
<div class="t" style="left:763.00px;top:181.00px;font-size:13.81px;color:#333;">0</div>
<div class="t" style="left:754.00px;top:193.00px;font-size:13.81px;color:#333;transform:scaleX(0.9899);">.00</div>
<div class="t" style="left:784.00px;top:181.00px;font-size:13.81px;color:#333;transform:scaleX(1.1983);">.00</div>
<svg class="r" style="left:782px;top:192px;" width="16" height="14" viewBox="0 0 16 14"><path d="M1 8 H13 M9 4 L13 8 L9 12" stroke="#1e88d3" stroke-width="1.5" fill="none"/></svg>
<div class="t" style="left:797.00px;top:193.00px;font-size:13.81px;color:#333;">0</div>
<div class="t" style="left:765.60px;top:222.00px;font-size:15.26px;color:#444;transform:scaleX(1.0395);">Number</div>
<svg class="r" style="left:862px;top:223px;" width="12" height="12" viewBox="0 0 12 12"><g fill="none" stroke="#555" stroke-width="1.3"><path d="M0.7 11 L0.7 0.7 L11 0.7"/><path d="M3 3 L10.5 10.5 M5 11 L11 11 L11 5"/></g></svg>
<div class="r" style="left:879px;top:103px;width:1px;height:132px;background:#c8c8c8;"></div>
<svg class="r" style="left:895px;top:106px;" width="26" height="24" viewBox="0 0 26 24"><g transform="translate(1.4,1.4)">
      <g fill="none" stroke="#444" stroke-width="1.3"><rect x="0" y="0" width="23" height="20.6"/><path d="M0 6.8 H4.4 M13 6.8 H23 M0 13.6 H4.4 M15.8 13.6 H23 M13 0 V13.6 M18.3 0 V20.6 M10.5 6.8 V13.6 M4.4 6.8 V13.6"/></g>
      <rect x="4.4" y="0" width="8.6" height="6.6" fill="#f6a5b0" stroke="#e03141" stroke-width="1.4"/>
      <rect x="4.4" y="13.6" width="11.4" height="7" fill="#f6a5b0" stroke="#e03141" stroke-width="1.4"/>
      <path d="M5.6 7.5 V13 M8.8 7.5 V13" stroke="#1e6fc8" stroke-width="1.5"/>
    </g></svg>
<div class="t" style="left:924.00px;top:111.00px;font-size:18.90px;color:#444;transform:scaleX(0.9627);">Conditional Formatting</div>
<svg class="r" style="left:1114px;top:116px;" width="9.5" height="6.8" viewBox="0 0 9.5 6.8"><path d="M1 1 L4.75 5.8 L8.5 1" fill="none" stroke="#444" stroke-width="1.6"/></svg>
<svg class="r" style="left:895px;top:140px;" width="26" height="24" viewBox="0 0 26 24"><g transform="translate(1.4,1.4)">
      <g fill="none" stroke="#444" stroke-width="1.3"><path d="M0 20.6 V0 H23 V8 M0 6.8 H23 M0 13.6 H6.5 M6.8 0 V11 M14.8 0 V6.8"/></g>
      <path d="M7 7 H23 V20.6 H7 Z" fill="#8dc0ea"/><path d="M23 12 V20.6 H14" fill="none" stroke="#1e6fc8" stroke-width="1.4"/>
      <path d="M21.8 7.6 Q23.4 8.6 22.4 10 L12 19 L10 17 Z" fill="#fafafa" stroke="#333" stroke-width="1.1"/>
      <path d="M10 17 Q7.5 16 6.2 18.5 Q5.6 20.6 2.5 21.2 Q7 23.5 10.3 21.5 Q12 20 12 19 Z" fill="#1e6fc8"/>
    </g></svg>
<div class="t" style="left:924.00px;top:145.00px;font-size:18.90px;color:#444;transform:scaleX(0.9141);">Format as Table</div>
<svg class="r" style="left:1053.5px;top:150px;" width="9.5" height="6.8" viewBox="0 0 9.5 6.8"><path d="M1 1 L4.75 5.8 L8.5 1" fill="none" stroke="#444" stroke-width="1.6"/></svg>
<svg class="r" style="left:895px;top:174px;" width="26" height="24" viewBox="0 0 26 24"><g transform="translate(1.4,1.4)">
      <g fill="none" stroke="#444" stroke-width="1.3"><rect x="0" y="0" width="23" height="20.6"/><path d="M0 3.8 H23 M4.8 0 V20.6 M18.6 0 V20.6"/></g>
      <path d="M4.8 3.8 H18.6 V15.5 H4.8 Z" fill="#8dc0ea" stroke="#1e6fc8" stroke-width="1.2"/>
      <path d="M21.8 7.6 Q23.4 8.6 22.4 10 L12 19 L10 17 Z" fill="#fafafa" stroke="#333" stroke-width="1.1"/>
      <path d="M10 17 Q7.5 16 6.2 18.5 Q5.6 20.6 2.5 21.2 Q7 23.5 10.3 21.5 Q12 20 12 19 Z" fill="#1e6fc8"/>
    </g></svg>
<div class="t" style="left:924.00px;top:179.00px;font-size:18.90px;color:#444;transform:scaleX(0.8624);">Cell Styles</div>
<svg class="r" style="left:1007.5px;top:184px;" width="9.5" height="6.8" viewBox="0 0 9.5 6.8"><path d="M1 1 L4.75 5.8 L8.5 1" fill="none" stroke="#444" stroke-width="1.6"/></svg>
<div class="t" style="left:992.00px;top:222.00px;font-size:15.26px;color:#444;transform:scaleX(0.9378);">Styles</div>
<div class="r" style="left:1145px;top:103px;width:1px;height:132px;background:#c8c8c8;"></div>
<svg class="r" style="left:1161px;top:106px;" width="26" height="24" viewBox="0 0 26 24"><g fill="none" stroke="#444" stroke-width="1.2"><rect x="1" y="1" width="24" height="21"/><path d="M1 8 H25 M1 15 H25 M9 1 V22 M17 1 V22"/></g>
      <rect x="10" y="8" width="14" height="7" fill="#7fb8e6"/><path d="M3 11.5 H14 M6.5 8 L3 11.5 L6.5 15" stroke="#1e88d3" stroke-width="1.5" fill="none"/></svg>
<div class="t" style="left:1191.00px;top:111.00px;font-size:18.90px;color:#444;transform:scaleX(0.9103);">Insert</div>
<svg class="r" style="left:1248.5px;top:116px;" width="10" height="6.8" viewBox="0 0 10 6.8"><path d="M1 1 L5.0 5.8 L9 1" fill="none" stroke="#444" stroke-width="1.6"/></svg>
<svg class="r" style="left:1161px;top:140px;" width="26" height="24" viewBox="0 0 26 24"><g fill="none" stroke="#444" stroke-width="1.2"><path d="M1 1 H17 M1 22 H17 M1 1 V22 M1 8 H12 M1 15 H12 M9 1 V8 M9 15 V22"/></g>
      <rect x="3" y="7" width="11" height="9" fill="#7fb8e6" stroke="#1e88d3" stroke-width="1.2"/><path d="M17 7 L24 15 M24 7 L17 15" stroke="#e8444a" stroke-width="1.7"/></svg>
<div class="t" style="left:1191.00px;top:145.00px;font-size:18.90px;color:#444;transform:scaleX(0.8973);">Delete</div>
<svg class="r" style="left:1254.5px;top:150px;" width="10" height="6.8" viewBox="0 0 10 6.8"><path d="M1 1 L5.0 5.8 L9 1" fill="none" stroke="#444" stroke-width="1.6"/></svg>
<svg class="r" style="left:1161px;top:173px;" width="26" height="25" viewBox="0 0 26 25"><g fill="none" stroke="#444" stroke-width="1.2"><rect x="1" y="4" width="24" height="20"/><path d="M1 10 H25 M1 17 H25 M8 4 V24 M17 4 V24"/></g>
      <rect x="8" y="8" width="10" height="10" fill="#7fb8e6"/><path d="M6 2 H20 M6 0 V4 M20 0 V4" stroke="#1e88d3" stroke-width="1.4"/></svg>
<div class="t" style="left:1191.00px;top:179.00px;font-size:18.90px;color:#444;transform:scaleX(0.9364);">Format</div>
<svg class="r" style="left:1252.5px;top:184px;" width="10" height="6.8" viewBox="0 0 10 6.8"><path d="M1 1 L5.0 5.8 L9 1" fill="none" stroke="#444" stroke-width="1.6"/></svg>
<div class="t" style="left:1198.00px;top:222.00px;font-size:15.26px;color:#444;transform:scaleX(0.9600);">Cells</div>
<div class="r" style="left:1284px;top:103px;width:1px;height:132px;background:#c8c8c8;"></div>
<svg class="r" style="left:1302px;top:106px;" width="22" height="23" viewBox="0 0 22 23"><path d="M20 4 V1.5 H2 L11 11.5 L2 21.5 H20 V19" fill="none" stroke="#333" stroke-width="1.6"/></svg>
<svg class="r" style="left:1333.5px;top:116px;" width="10" height="6.8" viewBox="0 0 10 6.8"><path d="M1 1 L5.0 5.8 L9 1" fill="none" stroke="#444" stroke-width="1.6"/></svg>
<svg class="r" style="left:1301px;top:140px;" width="25" height="24" viewBox="0 0 25 24"><g fill="none" stroke="#333" stroke-width="1.6"><path d="M1 1 H24 V23 H1 Z M1 5 H24"/></g><path d="M12.5 9 V19 M8.5 15 L12.5 19 L16.5 15" stroke="#1e88d3" stroke-width="1.6" fill="none"/></svg>
<svg class="r" style="left:1333.5px;top:150px;" width="10" height="6.8" viewBox="0 0 10 6.8"><path d="M1 1 L5.0 5.8 L9 1" fill="none" stroke="#444" stroke-width="1.6"/></svg>
<svg class="r" style="left:1300px;top:174px;" width="25" height="25" viewBox="0 0 25 25"><path d="M1.5 13 L12 2.5 L23 13 L12.5 23.5 Z" fill="#fafafa" stroke="#9c3ab0" stroke-width="1.6"/><path d="M1.5 13 L7 7.5 L17.5 18 L12.5 23.5 Z" fill="#c98ad4" stroke="#9c3ab0" stroke-width="1.6"/></svg>
<svg class="r" style="left:1333.5px;top:184px;" width="10" height="6.8" viewBox="0 0 10 6.8"><path d="M1 1 L5.0 5.8 L9 1" fill="none" stroke="#444" stroke-width="1.6"/></svg>
<svg class="r" style="left:1360px;top:108px;" width="20" height="44" viewBox="0 0 20 44"><path d="M4 20.5 L10.5 2.8 L17 20.5 M6.3 14.5 H14.7" fill="none" stroke="#1e88d3" stroke-width="1.7"/><path d="M4 24.2 H15.5 L4.5 40.5 H16.5" fill="none" stroke="#333" stroke-width="1.7"/></svg>
<svg class="r" style="left:1380px;top:118px;" width="27" height="27" viewBox="0 0 27 27"><path d="M1.8 1.8 H24.5 V5 L16.6 13.5 V25 H10.8 V13.5 L1.8 5 Z" fill="#fafafa" stroke="#333" stroke-width="1.6"/></svg>
<div class="t" style="left:1358.00px;top:161.00px;font-size:18.02px;color:#444;transform:scaleX(1.0378);">Sort &amp;</div>
<div class="t" style="left:1356.50px;top:185.00px;font-size:18.02px;color:#444;transform:scaleX(0.9122);">Filter</div>
<svg class="r" style="left:1399px;top:189px;" width="10" height="6.8" viewBox="0 0 10 6.8"><path d="M1 1 L5.0 5.8 L9 1" fill="none" stroke="#444" stroke-width="1.6"/></svg>
<svg class="r" style="left:1426px;top:107px;" width="48" height="48" viewBox="0 0 48 48"><g fill="#fafafa" stroke="#333" stroke-width="1.6"><circle cx="29.2" cy="17.6" r="15"/><path d="M18.3 28.5 L1.8 45" fill="none"/></g></svg>
<div class="t" style="left:1423.50px;top:161.00px;font-size:18.02px;color:#444;transform:scaleX(1.0079);">Find &amp;</div>
<div class="t" style="left:1418.00px;top:185.00px;font-size:18.02px;color:#444;transform:scaleX(0.8781);">Select</div>
<svg class="r" style="left:1470px;top:189px;" width="10" height="6.8" viewBox="0 0 10 6.8"><path d="M1 1 L5.0 5.8 L9 1" fill="none" stroke="#444" stroke-width="1.6"/></svg>
<div class="t" style="left:1366.00px;top:222.00px;font-size:15.26px;color:#444;transform:scaleX(1.0171);">Editing</div>
<div class="r" style="left:1496px;top:103px;width:1px;height:132px;background:#c8c8c8;"></div>
<svg class="r" style="left:1569px;top:225px;" width="18" height="12" viewBox="0 0 18 12"><path d="M1 11 L9 2 L17 11" fill="none" stroke="#333" stroke-width="1.6"/></svg>
<div class="r" style="left:339px;top:0px;width:334px;height:921px;background:#fff;box-shadow:inset 0 0 0 1px #c6c6c6, 2px 3px 6px rgba(0,0,0,0.12);"></div>
<div class="r" style="left:347px;top:8px;width:318px;height:42px;background:#fff;box-shadow:inset 0 0 0 1px #c6c6c6;"></div>
<div class="t" style="left:366.50px;top:20.00px;font-size:18.75px;color:#616161;transform:scaleX(0.9129);">Search the menus</div>
<svg class="r" style="left:362px;top:65px;" width="18" height="25" viewBox="0 0 18 25"><g fill="none"><path d="M4.2 18 L12.8 0.5 M12.5 18 L4 0.5" stroke="#333" stroke-width="1.1"/>
      <circle cx="3.6" cy="21" r="2.3" stroke="#1e88d3" stroke-width="1.4"/><circle cx="13" cy="21" r="2.3" stroke="#1e88d3" stroke-width="1.4"/></g></svg>
<div class="t" style="left:396.60px;top:70.00px;font-size:18.46px;color:#262626;transform:scaleX(0.9197);">Cu<u>t</u></div>
<div class="t" style="left:396.60px;top:253.00px;font-size:18.46px;color:#262626;transform:scaleX(0.8792);">Paste <u>S</u>pecial...</div>
<div class="t" style="left:396.60px;top:300.00px;font-size:18.46px;color:#262626;transform:scaleX(0.9625);">Smart <u>L</u>ookup</div>
<div class="t" style="left:396.60px;top:346.00px;font-size:18.46px;color:#262626;transform:scaleX(0.8950);"><u>I</u>nsert...</div>
<div class="t" style="left:396.60px;top:390.00px;font-size:18.46px;color:#262626;transform:scaleX(0.8784);"><u>D</u>elete...</div>
<div class="t" style="left:396.60px;top:433.00px;font-size:18.46px;color:#262626;transform:scaleX(0.9234);">Clear Co<u>n</u>tents</div>
<div class="t" style="left:396.60px;top:481.00px;font-size:18.46px;color:#262626;transform:scaleX(0.9037);">Translate</div>
<div class="t" style="left:396.60px;top:528.00px;font-size:18.46px;color:#262626;transform:scaleX(0.9394);"><u>Q</u>uick Analysis</div>
<div class="t" style="left:396.60px;top:572.00px;font-size:18.46px;color:#262626;transform:scaleX(0.9029);">Filt<u>e</u>r</div>
<div class="t" style="left:396.60px;top:616.00px;font-size:18.46px;color:#262626;transform:scaleX(0.9506);">S<u>o</u>rt</div>
<div class="t" style="left:396.60px;top:664.00px;font-size:18.46px;color:#262626;transform:scaleX(0.9500);"><u>G</u>et Data from Table/Range...</div>
<div class="t" style="left:396.60px;top:710.00px;font-size:18.46px;color:#262626;transform:scaleX(0.9685);">Insert Co<u>m</u>ment</div>
<div class="t" style="left:396.60px;top:757.00px;font-size:18.46px;color:#262626;transform:scaleX(0.9051);"><u>F</u>ormat Cells...</div>
<div class="t" style="left:396.60px;top:801.00px;font-size:18.46px;color:#262626;transform:scaleX(0.9565);">Pic<u>k</u> From Drop-down List...</div>
<div class="t" style="left:396.60px;top:845.00px;font-size:18.46px;color:#262626;transform:scaleX(0.9275);">Define N<u>a</u>me...</div>
<div class="t" style="left:396.60px;top:889.00px;font-size:18.46px;color:#262626;transform:scaleX(0.8921);">L<u>i</u>nk</div>
<div class="r" style="left:389px;top:283px;width:282px;height:1px;background:#e1e1e1;"></div>
<div class="r" style="left:389px;top:330px;width:282px;height:1px;background:#e1e1e1;"></div>
<div class="r" style="left:389px;top:465px;width:282px;height:1px;background:#e1e1e1;"></div>
<div class="r" style="left:389px;top:512px;width:282px;height:1px;background:#e1e1e1;"></div>
<div class="r" style="left:389px;top:647px;width:282px;height:1px;background:#e1e1e1;"></div>
<div class="r" style="left:389px;top:694px;width:282px;height:1px;background:#e1e1e1;"></div>
<div class="r" style="left:389px;top:741px;width:282px;height:1px;background:#e1e1e1;"></div>
<div class="r" style="left:340px;top:104px;width:332px;height:40px;background:#d2d2d2;"></div>
<div class="r" style="left:339.5px;top:99px;width:332.5px;height:42px;box-sizing:border-box;border:5px solid #000;border-radius:6px;"></div>
<svg class="r" style="left:358px;top:109px;" width="26" height="25" viewBox="0 0 26 25"><g fill="#fafafa" stroke="#333" stroke-width="1.5"><path d="M9.5 19.5 H1.5 V1.5 H11 L12.5 3 V5"/>
      <path d="M10 5 H19 L24 10 V23.5 H10 Z" fill="#f5f5f5"/><path d="M19 5 V10 H24" fill="none"/><path d="M14 15.5 H20 M14 18.5 H20" stroke-width="1"/></g></svg>
<div class="t" style="left:396.60px;top:114.00px;font-size:18.46px;color:#262626;transform:scaleX(0.9605);"><u>C</u>opy</div>
<svg class="r" style="left:361px;top:150px;" width="23" height="26" viewBox="0 0 23 26"><g stroke-width="1.5"><path d="M11 23.8 H1.8 V4.8 H18.2 V11" fill="#fafafa" stroke="#e46c0a" stroke-width="1.8"/>
      <path d="M3.6 22 V6.6 M3.6 22 H11" fill="none" stroke="#f9d98b" stroke-width="1.2"/>
      <path d="M4.5 3.5 H8.5 Q8.5 0.8 10.5 0.8 Q12.5 0.8 12.5 3.5 H16 V8.5 H4.5 Z" fill="#fafafa" stroke="#777" stroke-width="1.3"/>
      <rect x="11.5" y="11" width="10" height="13" fill="#fafafa" stroke="#333"/></g></svg>
<div class="t" style="left:397.60px;top:160.00px;font-size:18.46px;color:#1a1a1a;font-weight:bold;transform:scaleX(0.9399);">Paste Options:</div>
<svg class="r" style="left:398px;top:194px;" width="32" height="37" viewBox="0 0 32 37"><g stroke-width="1.6"><path d="M15 34.8 H2 V7 H24.5 V15" fill="#fafafa" stroke="#e46c0a" stroke-width="2"/>
      <path d="M4.2 9 V32.8 H15" fill="none" stroke="#f9d98b" stroke-width="1.4"/>
      <path d="M6 5 H12 Q12 1.2 15 1.2 Q18 1.2 18 5 H21 V11 H6 Z" fill="#fafafa" stroke="#777" stroke-width="1.4"/>
      <rect x="16.8" y="17" width="13.8" height="18.5" fill="#fafafa" stroke="#333"/></g></svg>
<svg class="r" style="left:359px;top:293px;" width="26" height="26" viewBox="0 0 26 26"><circle cx="15.5" cy="9" r="7.6" fill="#fafafa" stroke="#1e88d3" stroke-width="1.5"/>
      <path d="M10 14.5 L1.5 23" stroke="#1e88d3" stroke-width="1.6" stroke-linecap="round"/>
      <rect x="14.7" y="7.5" width="1.6" height="5.5" fill="#222"/><rect x="14.7" y="4.8" width="1.6" height="1.6" fill="#222"/></svg>
<svg class="r" style="left:358px;top:475px;" width="27" height="27" viewBox="0 0 27 27"><path d="M1 2.5 L11 4.8 L6.8 6.6 L10.6 10 L1 11 Z" fill="#1e6fc8"/>
      <path d="M2.6 15.2 Q6 13 8.8 15 V25 M8.8 19.6 Q2 18.6 1.8 22.2 Q2 25.2 5.2 24.8 Q7.8 24.4 8.8 22" fill="none" stroke="#1e6fc8" stroke-width="1.7"/>
      <text x="13" y="13.5" font-family="Liberation Sans" font-size="13" fill="#168a2a">&#12354;</text>
      <path d="M25 16 L25 25.5 L14.5 23 L18.5 21.5 L14.5 17.5 Z" fill="#168a2a"/></svg>
<svg class="r" style="left:358px;top:522px;" width="27" height="25" viewBox="0 0 27 25"><g fill="none" stroke="#333" stroke-width="1.5"><path d="M9 2.5 H24.5 V23 H1.5 V14"/><path d="M7 10 V17 H20.5 V12.5 H12"/></g>
      <path d="M6 0.5 H11.5 L8.5 5.5 H11 L3 14 L5 7.5 H2.5 Z" fill="#f08a1c" stroke="#e46c0a" stroke-width="0.8"/></svg>
<svg class="r" style="left:649px;top:571px;" width="10" height="16" viewBox="0 0 10 16"><path d="M1.5 1 L8.5 7.5 L1.5 14" fill="none" stroke="#333" stroke-width="1.4"/></svg>
<svg class="r" style="left:649px;top:615px;" width="10" height="16" viewBox="0 0 10 16"><path d="M1.5 1 L8.5 7.5 L1.5 14" fill="none" stroke="#333" stroke-width="1.4"/></svg>
<svg class="r" style="left:358px;top:657px;" width="25" height="25" viewBox="0 0 25 25"><g fill="none" stroke="#444" stroke-width="1.5"><rect x="1.3" y="1.3" width="22" height="21.5"/><path d="M1.3 9.5 H23.3 M1.3 14 H23.3 M1.3 18.3 H23.3 M12.3 9.5 V22.8"/></g>
      <path d="M5 4.5 H10 L7.5 7 Z M14.5 4.5 H19.5 L17 7 Z" fill="#1e88d3"/></svg>
<svg class="r" style="left:358px;top:704px;" width="25" height="25" viewBox="0 0 25 25"><path d="M14 2.5 H22.5 V15 H9.5 L5.5 21 V15 H3.5 V10" fill="#fafafa" stroke="#444" stroke-width="1.5"/>
      <path d="M6 1.5 V11 M1 6.2 H11" stroke="#1f9b3a" stroke-width="1.6"/></svg>
<svg class="r" style="left:361px;top:751px;" width="20" height="26" viewBox="0 0 20 26"><rect x="1.3" y="1.3" width="17" height="23" fill="#fafafa" stroke="#444" stroke-width="1.5"/>
      <rect x="5" y="8" width="3.2" height="3.2" fill="none" stroke="#777" stroke-width="1.2"/><rect x="5" y="15" width="3.2" height="3.2" fill="none" stroke="#777" stroke-width="1.2"/>
      <path d="M10.5 9.6 H13.5 M10.5 16.6 H13.5" stroke="#777" stroke-width="1.2"/></svg>
<svg class="r" style="left:358px;top:887px;" width="26" height="18" viewBox="0 0 26 18"><g fill="none" stroke="#333" stroke-width="1.6"><path d="M8.5 10 C4 10 2 8 2 5.5 C2 3 4 1.5 6.5 1.5 H12.5 C15 1.5 17 3 17 5.5 C17 8 15 9.5 12.5 9.5"/>
      <path d="M17.5 6.5 C22 6.5 24 8.5 24 11 C24 13.5 22 15 19.5 15 H13.5 C11 15 9 13.5 9 11 C9 8.5 11 7 13.5 7"/></g></svg>
<div class="r" style="left:339px;top:944px;width:382px;height:80px;background:#fff;box-shadow:inset 0 0 0 1px #c6c6c6, 0 0 4px rgba(0,0,0,0.10);"></div>
<div class="r" style="left:344px;top:949.5px;width:90px;height:35.5px;background:#fff;box-shadow:inset 0 0 0 1px #c6c6c6;"></div>
<div class="t" style="left:347.50px;top:959.00px;font-size:18.17px;color:#3a3a3a;transform:scaleX(0.9377);">Calibri</div>
<svg class="r" style="left:420.5px;top:966px;" width="9.5" height="7" viewBox="0 0 9.5 7"><path d="M1 1 L4.75 6 L8.5 1" fill="none" stroke="#333" stroke-width="1.6"/></svg>
<div class="r" style="left:433px;top:949.5px;width:69px;height:35.5px;background:#fff;box-shadow:inset 0 0 0 1px #c6c6c6;"></div>
<div class="t" style="left:437.50px;top:959.00px;font-size:18.17px;color:#3a3a3a;">6</div>
<svg class="r" style="left:487.8px;top:966px;" width="10.2" height="7" viewBox="0 0 10.2 7"><path d="M1 1 L5.1 6 L9.2 1" fill="none" stroke="#333" stroke-width="1.6"/></svg>
<div class="t" style="left:507.50px;top:953.00px;font-size:25.44px;color:#333;transform:scaleX(1.0268);">A</div>
<svg class="r" style="left:524px;top:955px;" width="8" height="6" viewBox="0 0 8 6"><path d="M1 5 L4 1.5 L7 5" fill="none" stroke="#1e88d3" stroke-width="1.5"/></svg>
<div class="t" style="left:542.30px;top:957.00px;font-size:20.35px;color:#333;transform:scaleX(1.0048);">A</div>
<svg class="r" style="left:555px;top:955px;" width="8" height="6" viewBox="0 0 8 6"><path d="M1 1.5 L4 5 L7 1.5" fill="none" stroke="#1e88d3" stroke-width="1.5"/></svg>
<div class="t" style="left:576.00px;top:956.00px;font-size:23.26px;color:#333;transform:scaleX(0.8212);">$</div>
<svg class="r" style="left:603.5px;top:966px;" width="10" height="6.8" viewBox="0 0 10 6.8"><path d="M1 1 L5.0 5.8 L9 1" fill="none" stroke="#333" stroke-width="1.6"/></svg>
<div class="t" style="left:625.00px;top:955.00px;font-size:24.71px;color:#333;">%</div>
<svg class="r" style="left:662px;top:955px;" width="13" height="19" viewBox="0 0 13 19"><path d="M6.5 1 C10.5 1 12 4 11.5 7.5 C11 12 8 16 3 18 L2.5 16.5 C5.5 15 7.5 13 8 11 C4 11.5 2 9 2.5 6 C3 2.5 4.5 1 6.5 1 Z" fill="#333"/></svg>
<svg class="r" style="left:687px;top:954px;" width="24" height="24" viewBox="0 0 24 24"><g fill="none" stroke="#444" stroke-width="1.3"><rect x="1" y="1" width="22" height="22"/></g><rect x="1.7" y="6" width="20.6" height="12" fill="#fff" stroke="#1e88d3" stroke-width="1.4"/>
      <path d="M4.5 12 H19.5 M8 9 L4.5 12 L8 15 M16 9 L19.5 12 L16 15" stroke="#1e88d3" stroke-width="1.5" fill="none"/></svg>
<div class="t" style="left:354.70px;top:991.00px;font-size:21.80px;color:#333;font-weight:bold;transform:scaleX(0.7007);">B</div>
<svg class="r" style="left:387px;top:993px;" width="12" height="17" viewBox="0 0 12 17"><path d="M4.5 1.2 H11 M1 15.8 H7.5 M8.2 1.2 L4 15.8" fill="none" stroke="#333" stroke-width="1.4"/></svg>
<div class="r" style="left:408.5px;top:984.5px;width:31.5px;height:35.5px;background:#c8c8c8;"></div>
<svg class="r" style="left:413px;top:991px;" width="22" height="22" viewBox="0 0 22 22"><path d="M1 1.5 H21 M4.5 7.5 H17.5 M1 13.5 H21 M4.5 19.5 H17.5" stroke="#333" stroke-width="2"/></svg>
<svg class="r" style="left:443px;top:991px;" width="27" height="25" viewBox="0 0 27 25"><path d="M5 11 L12 3 L20 11 L12.5 18.5 Z" fill="#fff" stroke="#333" stroke-width="1.6"/><path d="M7 1 L12 6" stroke="#333" stroke-width="1.6"/>
      <path d="M19 9 Q22 4 24 9 Q24 12 21.5 12" fill="none" stroke="#1e6fc8" stroke-width="2"/><rect x="1" y="17.5" width="24" height="6" fill="#00b0f0"/></svg>
<svg class="r" style="left:477px;top:1002px;" width="10.2" height="7" viewBox="0 0 10.2 7"><path d="M1 1 L5.1 6 L9.2 1" fill="none" stroke="#333" stroke-width="1.6"/></svg>
<div class="t" style="left:499.00px;top:990.00px;font-size:22.53px;color:#333;transform:scaleX(1.4906);">A</div>
<div class="r" style="left:498px;top:1009px;width:24.5px;height:6px;background:#333;"></div>
<svg class="r" style="left:531px;top:1002px;" width="10.2" height="7" viewBox="0 0 10.2 7"><path d="M1 1 L5.1 6 L9.2 1" fill="none" stroke="#333" stroke-width="1.6"/></svg>
<svg class="r" style="left:551px;top:990px;" width="25" height="25" viewBox="0 0 25 25"><g fill="none" stroke="#444" stroke-width="1.2" stroke-dasharray="1.2 1.6"><path d="M1.3 21 V1.3 H23.3 V21"/><path d="M12.3 1.3 V21 M1.3 11.3 H23.3"/></g><rect x="0.7" y="21.2" width="23.2" height="1.8" fill="#222"/></svg>
<svg class="r" style="left:585px;top:1002px;" width="10.2" height="7" viewBox="0 0 10.2 7"><path d="M1 1 L5.1 6 L9.2 1" fill="none" stroke="#333" stroke-width="1.6"/></svg>
<svg class="r" style="left:605px;top:993px;" width="16" height="8" viewBox="0 0 16 8"><path d="M1 4 H13 M4.5 0.8 L1 4 L4.5 7.2" stroke="#1e88d3" stroke-width="1.5" fill="none"/></svg>
<div class="t" style="left:620.00px;top:991.00px;font-size:13.81px;color:#333;">0</div>
<div class="t" style="left:610.00px;top:1003.00px;font-size:13.81px;color:#333;transform:scaleX(0.9899);">.00</div>
<div class="t" style="left:637.00px;top:991.00px;font-size:13.81px;color:#333;transform:scaleX(1.2504);">.00</div>
<svg class="r" style="left:636px;top:1006px;" width="16" height="9" viewBox="0 0 16 9"><path d="M1 4.5 H13 M9.5 1.2 L13 4.5 L9.5 7.8" stroke="#1e88d3" stroke-width="1.5" fill="none"/></svg>
<div class="t" style="left:652.00px;top:1003.00px;font-size:13.81px;color:#333;">0</div>
<svg class="r" style="left:669px;top:990px;" width="26" height="25" viewBox="0 0 26 25"><g stroke-width="1.6"><path d="M2 15 Q7 14 11 10 L17 16 Q14 21 13 23 Z" fill="#fafafa" stroke="#e46c0a"/>
      <path d="M6 18.5 L13.5 17 L12.5 22 Z" fill="#f9d98b" stroke="none"/>
      <path d="M11 10 L14 7 L20 13 L17 16" fill="#fafafa" stroke="#333"/><path d="M17 10 L22.5 4.5 Q23.5 3 22 2 Q21 1 19.5 2.5 L14.5 7.5" fill="none" stroke="#333"/></g></svg>
<svg class="r" style="left:0px;top:0px;pointer-events:none;" width="1600" height="1020" viewBox="0 0 1600 1020"><g fill="#000">
      <path d="M587.3 141 L608 160.6 L597 161.5 L590.4 169.6 Z"/>
      <line x1="595" y1="158" x2="765.5" y2="507.7" stroke="#000" stroke-width="5.2"/>
      <path d="M218.4 789.8 L228.4 818.8 L218.4 814 L208.4 818.8 Z"/>
      <rect x="216" y="812" width="5" height="42.5"/>
    </g></svg>
<div class="t" style="left:762.20px;top:507.00px;font-size:34.88px;color:#000;font-weight:bold;transform:scaleX(0.9838);">Copy</div>
<div class="t" style="left:107.20px;top:863.00px;font-size:24.71px;color:#000;font-weight:bold;transform:scaleX(1.0427);">Right Click on the</div>
<div class="t" style="left:130.75px;top:897.00px;font-size:24.71px;color:#000;font-weight:bold;transform:scaleX(1.0907);">selected data</div>
</body></html>
